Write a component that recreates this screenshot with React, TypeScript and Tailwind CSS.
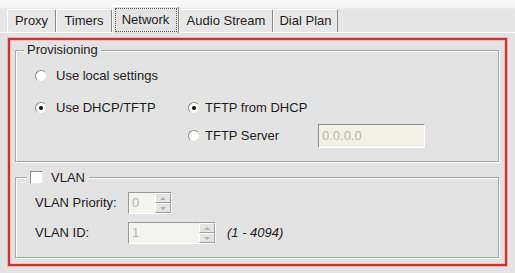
import React from 'react';

const tabs = [
    { label: 'Proxy', w: 'w-[49px]' },
    { label: 'Timers', w: 'w-[56px]' },
    { label: 'Network', w: 'w-[67px]', active: true },
    { label: 'Audio Stream', w: 'w-[94px]' },
    { label: 'Dial Plan', w: 'w-[65px]' },
];

const Radio = ({ checked = false }: { checked?: boolean }) => (
    <span className="relative w-[12px] h-[12px] shrink-0 rounded-full bg-white border border-[#8c8c8c] border-r-[#e0e0e0] border-b-[#e0e0e0] flex items-center justify-center">
        {checked && <span className="w-[4px] h-[4px] rounded-full bg-[#111]" />}
    </span>
);

const Spinner = ({ value, w }: { value: string; w: string }) => (
    <div className={`${w} h-[22px] flex border border-[#9a9a9a] border-r-white border-b-white bg-[#f3f3ef]`}>
        <span className="flex-1 pl-[3px] leading-[20px] text-[#b4b4b4]">{value}</span>
        <div className="w-[16px] flex flex-col">
            <div className="flex-1 flex items-center justify-center bg-[#e4e4e4] border border-white border-r-[#a0a0a0] border-b-[#a0a0a0]">
                <span className="w-0 h-0 border-l-[3px] border-r-[3px] border-b-[3px] border-l-transparent border-r-transparent border-b-[#b0b0b0]" />
            </div>
            <div className="flex-1 flex items-center justify-center bg-[#e4e4e4] border border-white border-r-[#a0a0a0] border-b-[#a0a0a0]">
                <span className="w-0 h-0 border-l-[3px] border-r-[3px] border-t-[3px] border-l-transparent border-r-transparent border-t-[#b0b0b0]" />
            </div>
        </div>
    </div>
);

export default function App() {
    return (
        <div className="w-[515px] h-[273px] flex flex-col bg-[#e3e3e3] font-['Liberation_Sans',Arial,sans-serif] text-[13px] text-[#1c1c1c] overflow-hidden">
            {/* tab strip */}
            <div className="h-[33px] flex items-end pl-[7px] bg-[linear-gradient(#f7f7f7_0px,#f7f7f7_7px,#e6e6e6_9px)]">
                {tabs.map((t) =>
                    t.active ? (
                        <div key={t.label} className={`${t.w} h-[27px] flex items-center justify-center bg-[#e3e3e3] border-l border-t border-white border-r border-r-[#8a8a8a] rounded-t-[2px] -mb-[1px] relative z-10`}>
                            <span className="px-[1px] h-[24px] w-[62px] leading-[22px] text-center border border-dotted border-[#555]">{t.label}</span>
                        </div>
                    ) : (
                        <div key={t.label} className={`${t.w} h-[23px] flex items-center justify-center bg-[#e7e7e7] border-l border-t border-white border-r border-r-[#8a8a8a] rounded-t-[2px]`}>
                            {t.label}
                        </div>
                    )
                )}
            </div>

            {/* panel */}
            <div className="flex-1 border-t border-white px-[8px] pt-[5px] pb-[7px]">
                <div className="h-[228px] border-2 border-[#cc3232] shadow-[0_0_0_1px_#f2b0b0,inset_0_0_0_1px_#f2c0c0] flex flex-col pl-[5px] pr-[6px] pt-[10px]">
                    {/* Provisioning */}
                    <div className="relative h-[112px] border border-[#a8a8a8] shadow-[inset_1px_1px_0_#fff,1px_1px_0_#fff]">
                        <span className="absolute -top-[9px] left-[8px] px-[3px] bg-[#e3e3e3] leading-[16px]">Provisioning</span>
                        <div className="pt-[15px] pl-[19px] flex flex-col">
                            <div className="h-[20px] flex items-center gap-[9px]">
                                <Radio />
                                <span>Use local settings</span>
                            </div>
                            <div className="mt-[12px] flex">
                                <div className="w-[153px] h-[20px] flex items-center gap-[9px]">
                                    <Radio checked />
                                    <span>Use DHCP/TFTP</span>
                                </div>
                                <div className="flex flex-col gap-[6px]">
                                    <div className="h-[20px] flex items-center gap-[5px]">
                                        <Radio checked />
                                        <span>TFTP from DHCP</span>
                                    </div>
                                    <div className="h-[24px] flex items-center">
                                        <Radio />
                                        <span className="ml-[5px] w-[113px]">TFTP Server</span>
                                        <div className="w-[107px] h-[24px] border border-[#909090] border-r-white border-b-white bg-[#f1f1e6] pl-[3px] leading-[22px] text-[#b8b8a8]">
                                            0.0.0.0
                                        </div>
                                    </div>
                                </div>
                            </div>
                        </div>
                    </div>

                    {/* VLAN */}
                    <div className="relative mt-[15px] h-[81px] border border-[#a8a8a8] shadow-[inset_1px_1px_0_#fff,1px_1px_0_#fff]">
                        <div className="absolute -top-[9px] left-[11px] pl-[3px] pr-[4px] bg-[#e3e3e3] flex items-center gap-[8px] h-[17px]">
                            <span className="w-[13px] h-[13px] bg-white border border-[#8c8c8c] border-r-[#e8e8e8] border-b-[#e8e8e8]" />
                            <span>VLAN</span>
                        </div>
                        <div className="pt-[14px] pl-[19px] flex flex-col gap-[8px]">
                            <div className="flex items-center">
                                <span className="w-[93px]">VLAN Priority:</span>
                                <Spinner value="0" w="w-[44px]" />
                            </div>
                            <div className="flex items-center">
                                <span className="w-[93px]">VLAN ID:</span>
                                <Spinner value="1" w="w-[88px]" />
                                <span className="ml-[11px] italic">(1 - 4094)</span>
                            </div>
                        </div>
                    </div>
                </div>
            </div>
        </div>
    );
}
